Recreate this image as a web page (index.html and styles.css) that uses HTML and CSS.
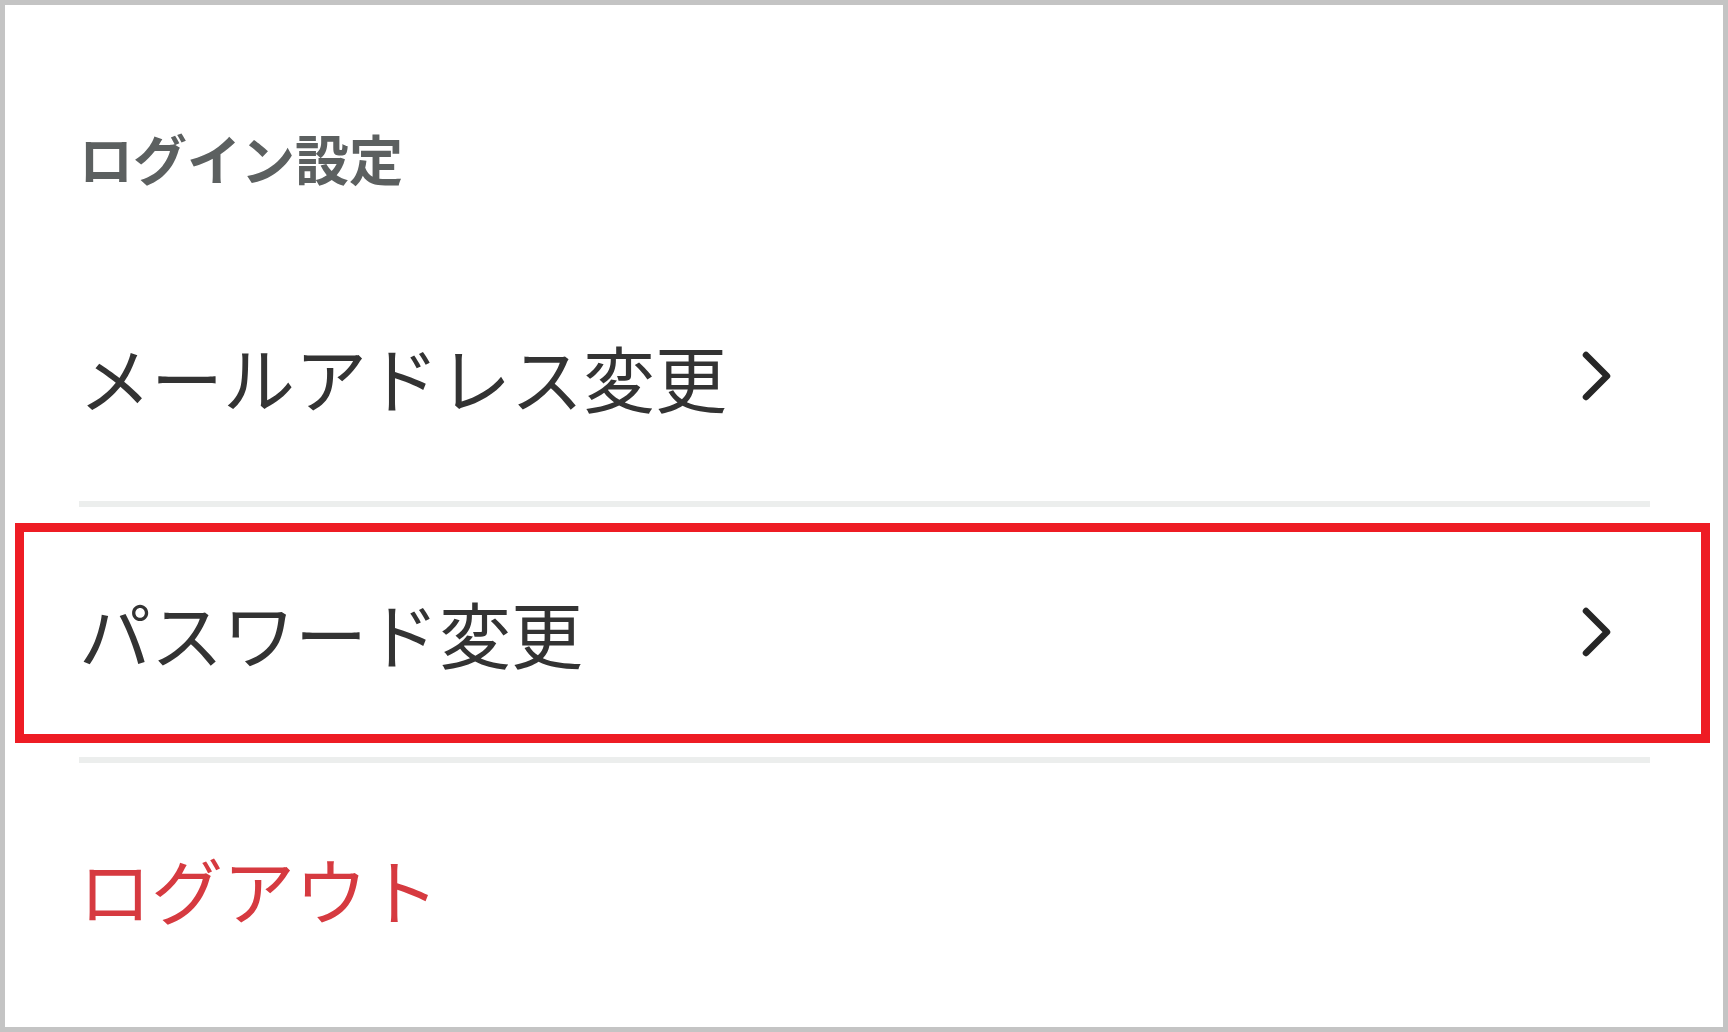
FILE: index.html
```html
<!DOCTYPE html>
<html lang="ja">
<head>
<meta charset="utf-8">
<title>ログイン設定</title>
<link rel="stylesheet" href="styles.css">
</head>
<body>
<div class="frame">
  <h2 class="section-title">ログイン設定</h2>
  <ul class="menu">
    <li class="menu-item">
      <span class="label">メールアドレス変更</span>
      <svg class="chevron" viewBox="0 0 30 50" width="30" height="50" aria-hidden="true">
        <polyline points="5,4 26,25 5,46" />
      </svg>
    </li>
    <li class="menu-item is-marked">
      <span class="label">パスワード変更</span>
      <svg class="chevron" viewBox="0 0 30 50" width="30" height="50" aria-hidden="true">
        <polyline points="5,4 26,25 5,46" />
      </svg>
      <span class="marker"></span>
    </li>
    <li class="menu-item menu-item--danger">
      <span class="label">ログアウト</span>
    </li>
  </ul>
</div>
</body>
</html>
```

FILE: styles.css
```css
* {
  box-sizing: border-box;
}

html, body {
  margin: 0;
  padding: 0;
  background: #ffffff;
}

body {
  font-family: "Noto Sans CJK JP", "Noto Sans", sans-serif;
}

.frame {
  width: 1728px;
  height: 1032px;
  border: 5px solid #c4c4c4;
  background: #ffffff;
  padding: 0 73px 0 74px;
}

.section-title {
  margin: 0;
  padding-top: 112px;
  height: 246px;
  font-size: 54px;
  line-height: 81px;
  font-weight: 700;
  color: #5c6060;
}

.menu {
  list-style: none;
  margin: 0;
  padding: 0;
}

.menu-item {
  position: relative;
  display: flex;
  align-items: center;
  justify-content: space-between;
  height: 256px;
  padding-right: 39px;
  border-bottom: 6px solid #eceeed;
  font-size: 72px;
  line-height: 1;
  color: #333333;
}

.menu-item--danger {
  border-bottom: none;
  height: 250px;
  color: #d63a40;
}

.chevron {
  display: block;
  flex: none;
}

.chevron polyline {
  fill: none;
  stroke: #262626;
  stroke-width: 6.5;
  stroke-linecap: round;
  stroke-linejoin: round;
}

/* red outline drawn around the highlighted row */
.marker {
  position: absolute;
  top: 16px;
  bottom: 14px;
  left: -64px;
  right: -60px;
  border: 9px solid #ee1c24;
  pointer-events: none;
}
```
